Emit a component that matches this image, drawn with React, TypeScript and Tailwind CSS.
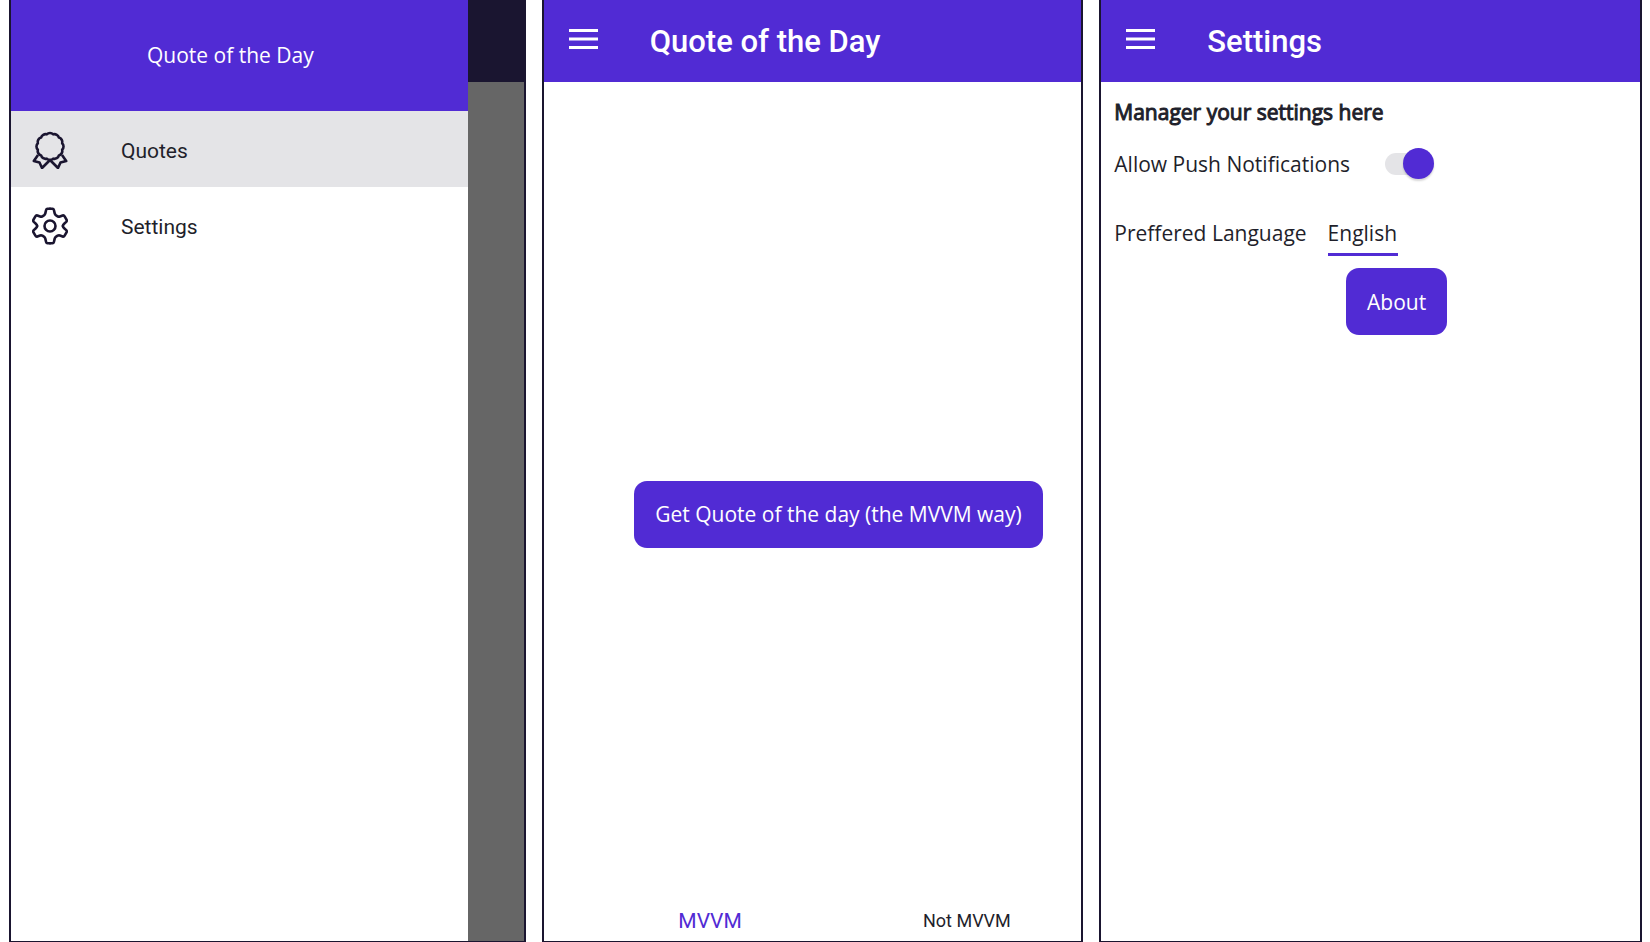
import { useState } from "react";

const MenuIcon = () => (
  <svg viewBox="0 0 29 21" className="h-[21px] w-[29px]" stroke="white" strokeWidth="3" fill="none" aria-hidden="true">
    <path d="M0 1.5H29M0 10H29M0 18.5H29" />
  </svg>
);

const LOBES = 12;
const rosettePoint = (i: number) => {
  const a = (Math.PI * (2 * i + 1)) / LOBES - Math.PI / 2;
  return `${(18 + 12.6 * Math.cos(a)).toFixed(2)} ${(15.5 + 12.6 * Math.sin(a)).toFixed(2)}`;
};
const rosette =
  `M${rosettePoint(0)}` +
  Array.from({ length: LOBES }, (_, i) => `A4.6 4.6 0 0 1 ${rosettePoint(i + 1)}`).join("") +
  "Z";

const AwardIcon = () => (
  <svg viewBox="0 0 36 38" className="h-[38px] w-[36px]" stroke="#1a1530" strokeWidth="2.6" strokeLinejoin="round" fill="none" aria-hidden="true">
    <path d={rosette} />
    <path d="M6 24L1.800 30L7.500 31.500L10 37L18 29L26 37L28.500 31.500L34.200 30L30 24" />
  </svg>
);

const gearQuarter =
  "M18 1.800H20.500Q21.600 1.800 21.900 3L22.700 6.400Q23 7.700 24.100 8.400L25.600 9.300Q26.700 9.900 27.900 9.500L30.600 8.500Q31.900 8.100 32.600 9.300L34.500 12.700Q35.100 13.900 34.200 14.900L31.900 17Q30.900 17.900 30.900 19";

const GearIcon = () => (
  <svg viewBox="0 0 36 38" className="h-[38px] w-[36px]" stroke="#1a1530" strokeWidth="2.6" strokeLinecap="round" strokeLinejoin="round" fill="none" aria-hidden="true">
    <path d={gearQuarter} />
    <path d={gearQuarter} transform="matrix(-1 0 0 1 36 0)" />
    <path d={gearQuarter} transform="matrix(1 0 0 -1 0 38)" />
    <path d={gearQuarter} transform="matrix(-1 0 0 -1 36 38)" />
    <circle cx="18" cy="19" r="5.5" />
  </svg>
);

const panel = "flex min-h-screen flex-col border-x-2 border-b border-[#1a1530] bg-white";

const AppBar = ({ title }: { title: string }) => (
  <header className="flex h-[82px] items-center gap-[52px] bg-[#512bd4] pl-[25px]">
    <button type="button" aria-label="Open menu" className="pb-[3px]">
      <MenuIcon />
    </button>
    <h1 className="pt-0.5 font-['Roboto'] text-[31px] font-medium leading-[36px] text-white">{title}</h1>
  </header>
);

const primary = "h-[67px] rounded-[13px] bg-[#512bd4] px-[21px] text-[21px] text-white";
const drawerItem = "flex h-[76px] items-center gap-[53px] pl-[21px] pt-0.5";

export default function App() {
  const [push, setPush] = useState(true);
  return (
    <main className="grid min-h-screen grid-cols-[516fr_541fr_542fr] gap-4 bg-white pl-[9px] pr-2 font-['Open_Sans',sans-serif] text-[21px] leading-[30px] text-[#1f1f2b]">
      <section className={panel}>
        <div className="flex grow">
          <div className="flex grow flex-col">
            <div className="flex h-[111px] items-center justify-center bg-[#512bd4] pb-0.5 pr-[18px] text-white">Quote of the Day</div>
            <nav className="flex flex-col font-['Roboto']">
              <a href="#quotes" className={`${drawerItem} bg-[#e4e4e7]`}>
                <AwardIcon />
                <span className="pt-0.5">Quotes</span>
              </a>
              <a href="#settings" className={drawerItem}>
                <GearIcon />
                <span className="pt-0.5">Settings</span>
              </a>
            </nav>
          </div>
          <div className="flex w-[56px] flex-col bg-[#666666]">
            <div className="h-[82px] bg-[#1a1530]" />
          </div>
        </div>
      </section>

      <section className={panel}>
        <AppBar title="Quote of the Day" />
        <div className="flex grow items-center justify-center pl-[52px] pt-10">
          <button type="button" className={primary}>Get Quote of the day (the MVVM way)</button>
        </div>
        <nav className="grid grid-cols-2 items-center gap-7 pb-[5px] pl-[52px] text-center font-['Roboto']">
          <a href="#mvvm" className="text-[#512bd4]">MVVM</a>
          <a href="#not-mvvm" className="text-[18px]">Not MVVM</a>
        </nav>
      </section>

      <section className={panel}>
        <AppBar title="Settings" />
        <div className="flex flex-col items-start px-[13px] pt-[15px]">
          <h2 className="[-webkit-text-stroke:1px]">Manager your settings here</h2>
          <div className="flex items-center gap-[35px] pt-[21px]">
            <label htmlFor="push">Allow Push Notifications</label>
            <span className="relative flex h-[31px] w-[48px] items-center">
              <input
                id="push"
                type="checkbox"
                role="switch"
                checked={push}
                onChange={(e) => setPush(e.target.checked)}
                className="peer h-[22px] w-[36px] appearance-none rounded-full bg-[#e4e4e7]"
              />
              <span className="pointer-events-none absolute left-0 size-[31px] rounded-full bg-[#512bd4] shadow-[0_2px_2px_#0000002a] peer-checked:left-[18px]" />
            </span>
          </div>
          <div className="flex items-start gap-[21px] pt-[39px]">
            <label htmlFor="language">Preffered Language</label>
            <select id="language" className="appearance-none border-b-[3px] border-[#512bd4] pb-[5px]">
              <option>English</option>
            </select>
          </div>
        </div>
        <div className="flex justify-center pl-[52px] pt-3">
          <button type="button" className={primary}>About</button>
        </div>
      </section>
    </main>
  );
}
